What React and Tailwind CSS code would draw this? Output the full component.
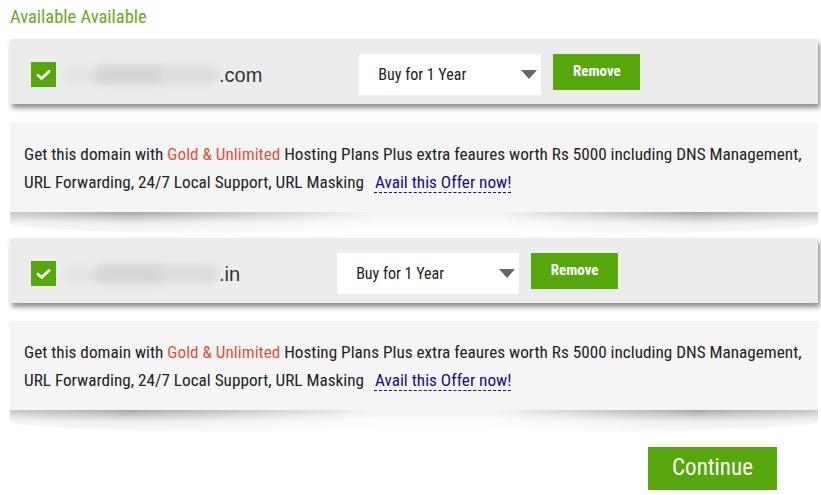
import React from 'react';

const narrow = "font-['Roboto_Condensed','Arial_Narrow','Liberation_Sans_Narrow','DejaVu_Sans_Condensed',sans-serif]";

const domains = [
  { id: 1, blurWidth: 154, tld: '.com' },
  { id: 2, blurWidth: 154, tld: '.in' },
];

const CheckBox = () => (
  <div className="w-[25px] h-[25px] bg-[#55a70b] flex items-center justify-center shrink-0">
    <svg width="15" height="12" viewBox="0 0 15 12" fill="none">
      <path d="M2 6.2 L5.6 9.6 L13 2.4" stroke="#fff" strokeWidth="2.8" strokeLinecap="round" strokeLinejoin="round" />
    </svg>
  </div>
);

const BlurredName = ({ width, tld }) => (
  <div className="flex items-center ml-[9px] shrink-0">
    <div className="relative h-[26px]" style={{ width }}>
      <div className="absolute left-0 top-[6px] w-[40px] h-[15px] rounded-full bg-[#e2e2e2] blur-[3px]" />
      <div className="absolute left-[30px] top-[3px] w-[72px] h-[20px] rounded-full bg-[#d6d6d6] blur-[3px]" />
      <div className="absolute left-[92px] top-[4px] w-[62px] h-[18px] rounded-full bg-[#dcdcdc] blur-[3px]" />
    </div>
    <span className="font-['Liberation_Sans',sans-serif] text-[20px] text-[#333] leading-none">{tld}</span>
  </div>
);

const DomainRow = ({ domain }) => (
  <div className="bg-[#ececec] h-[65px] flex items-center pl-[21px] shadow-[2px_4px_5px_rgba(0,0,0,0.45)]">
    <div className="flex items-center mt-[6px]">
      <CheckBox />
      <BlurredName width={domain.blurWidth} tld={domain.tld} />
    </div>
    <div className={`ml-[97px] mt-[6px] w-[182px] h-[41px] bg-white flex items-center pl-[19px] pr-[4px] ${narrow}`}>
      <span className="text-[16px] text-[#222]">Buy for 1 Year</span>
      <span className="ml-auto w-0 h-0 border-l-[8px] border-r-[8px] border-t-[9px] border-l-transparent border-r-transparent border-t-[#666]" />
    </div>
    <button className={`ml-[12px] w-[87px] h-[36px] bg-[#55a70b] text-white font-bold text-[15px] ${narrow}`}>
      Remove
    </button>
  </div>
);

const OfferBox = () => (
  <div>
    <div className={`bg-[#f5f5f5] h-[89px] pl-[14px] pt-[17px] text-[17.2px] leading-[28px] text-[#222] whitespace-nowrap ${narrow}`}>
      <p>
        Get this domain with <span className="text-[#e0523a]">Gold &amp; Unlimited</span> Hosting Plans Plus extra feaures worth Rs 5000 including DNS Management,
      </p>
      <p>
        URL Forwarding, 24/7 Local Support, URL Masking{' '}
        <a href="#" className="ml-[6px] pl-[1px] text-[#1a0a8c] border-b border-dashed border-[#1a0a8c] leading-[20px] inline-block">
          Avail this Offer now!
        </a>
      </p>
    </div>
    <div className="h-[24px] bg-[linear-gradient(to_bottom,rgba(0,0,0,0.35),rgba(0,0,0,0.08)_45%,transparent)] [mask-image:linear-gradient(to_right,rgba(0,0,0,0.6),black_15%,rgba(0,0,0,0.15)_45%,rgba(0,0,0,0.15)_60%,black_85%,rgba(0,0,0,0.6))] rounded-b-[50%]" />
  </div>
);

export default function App() {
  return (
    <div className="w-[821px] h-[495px] bg-white overflow-hidden pl-[10px] pr-[3px]">
      <h2 className={`text-[#6aaa25] text-[18.5px] leading-[22px] pt-[6px] ${narrow}`}>Available Available</h2>
      <div className="mt-[11px]">
        <DomainRow domain={domains[0]} />
      </div>
      <div className="mt-[19px]">
        <OfferBox />
      </div>
      <div className="mt-[2px]">
        <DomainRow domain={domains[1]} />
      </div>
      <div className="mt-[18px]">
        <OfferBox />
      </div>
      <div className="flex justify-end pr-[41px] mt-[13px]">
        <button className={`w-[129px] h-[43px] bg-[#55a70b] text-white text-[23px] ${narrow}`}>Continue</button>
      </div>
    </div>
  );
}
